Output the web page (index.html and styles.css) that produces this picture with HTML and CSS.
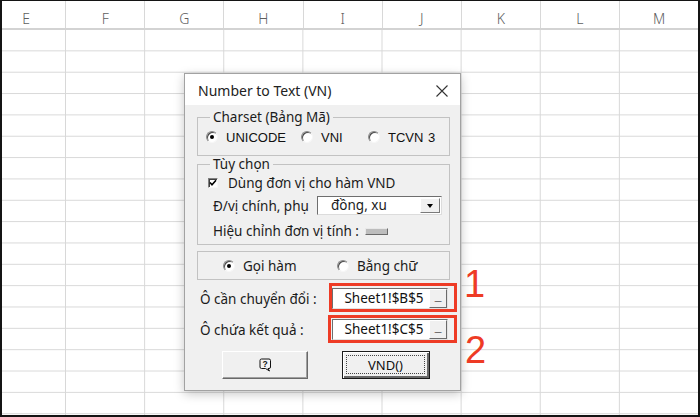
FILE: index.html
```html
<!DOCTYPE html>
<html>
<head>
<meta charset="utf-8">
<link rel="stylesheet" href="styles.css">
</head>
<body>
<div class="sheet">
  <div class="cols">
    <div class="col">E</div><div class="col">F</div><div class="col">G</div><div class="col">H</div><div class="col">I</div><div class="col">J</div><div class="col">K</div><div class="col">L</div><div class="col">M</div>
  </div>
  <div class="grid"></div>
</div>

<div class="dialog">
  <div class="titlebar">
    <span class="title">Number to Text (VN)</span>
    <svg class="close" width="12" height="12" viewBox="0 0 12 12"><path d="M0.5 0.5 L11.5 11.5 M11.5 0.5 L0.5 11.5" stroke="#333" stroke-width="1.1" fill="none"/></svg>
  </div>
  <div class="body">
    <fieldset class="group g1">
      <legend>Charset (Bảng Mã)</legend>
      <div class="g1-content">
        <label class="opt opt-a"><span class="radio on"></span><span class="sys">UNICODE</span></label>
        <label class="opt opt-b"><span class="radio"></span><span class="sys">VNI</span></label>
        <label class="opt"><span class="radio"></span><span class="sys tcvn">TCVN 3</span></label>
      </div>
    </fieldset>
    <fieldset class="group g2">
      <legend>Tùy chọn</legend>
      <div class="g2-content">
        <div class="row-check">
          <span class="check"><svg width="8" height="8" viewBox="0 0 8 8"><path d="M1 3.5 L3 5.8 L7 1.2" stroke="#000" stroke-width="1.6" fill="none"/></svg></span>
          <span>Dùng đơn vị cho hàm VND</span>
        </div>
        <div class="row-combo">
          <span class="combo-label">Đ/vị chính, phụ</span>
          <div class="combo">
            <span class="combo-text">đồng, xu</span>
            <span class="combo-btn"><span class="arrow"></span></span>
          </div>
        </div>
        <div class="row-adj">
          <span>Hiệu chỉnh đơn vị tính :</span>
          <span class="slider"></span>
        </div>
      </div>
    </fieldset>
    <div class="g3">
      <label class="opt opt-c"><span class="radio on"></span><span>Gọi hàm</span></label>
      <label class="opt"><span class="radio"></span><span>Bằng chữ</span></label>
    </div>
    <div class="refrow r1">
      <span class="ref-label">Ô cần chuyển đổi :</span>
      <div class="field"><span class="field-text">Sheet1!$B$5</span><span class="field-btn">_</span></div>
    </div>
    <div class="refrow r2">
      <span class="ref-label">Ô chứa kết quả :</span>
      <div class="field"><span class="field-text">Sheet1!$C$5</span><span class="field-btn">_</span></div>
    </div>
    <div class="buttons">
      <div class="btn btn-help">
        <svg width="13" height="14" viewBox="0 0 13 14"><path d="M2.5 1 H10 Q11.5 1 11.5 2.5 V9 Q11.5 10.5 10 10.5 H9 L10.5 13 L6.5 10.5 H2.5 Q1 10.5 1 9 V2.5 Q1 1 2.5 1 Z" fill="#f4f4f4" stroke="#111" stroke-width="1"/><text x="6.2" y="8.8" font-family="Liberation Sans, sans-serif" font-weight="bold" font-size="8.5" text-anchor="middle" fill="#111">?</text></svg>
      </div>
      <div class="btn btn-default"><span class="focus">VND()</span></div>
    </div>
  </div>
</div>

<div class="mark mark1"></div>
<div class="mark mark2"></div>
<div class="num num1">1</div>
<div class="num num2">2</div>
</body>
</html>
```
FILE: styles.css
```css
html, body {
  margin: 0;
  padding: 0;
}
body {
  width: 700px;
  height: 417px;
  overflow: hidden;
  background: #111;
}
.sheet {
  box-sizing: border-box;
  width: 700px;
  height: 417px;
  border-style: solid;
  border-color: #141414;
  border-width: 1px 2px 2px 2px;
  background: #fff;
  overflow: hidden;
}
.cols {
  display: flex;
  margin-left: -15px;
  height: 29px;
  box-sizing: border-box;
  border-bottom: 2px solid #d3d3d3;
}
.col {
  flex: 0 0 79.14px;
  box-sizing: border-box;
  border-right: 1px solid #d8d8d8;
  text-align: center;
  font-family: "Noto Sans", sans-serif;
  font-weight: 300;
  font-size: 14px;
  line-height: 16px;
  padding-top: 10px;
  color: #5e5e5e;
}
.grid {
  height: 400px;
  background-image:
    linear-gradient(to right, #d8d8d8 1px, transparent 1px),
    linear-gradient(to bottom, transparent 20.35px, #d8d8d8 20.35px);
  background-size: 79.14px 100%, 100% 21.35px;
  background-position: 63px 0, 0 0;
}

/* dialog */
.dialog {
  position: absolute;
  left: 184px;
  top: 73px;
  width: 277px;
  height: 318px;
  box-sizing: border-box;
  border: 1px solid #a2a2a2;
  background: #f0f0f0;
  box-shadow: 0 3px 10px rgba(0, 0, 0, 0.22);
  font-family: "Noto Sans", sans-serif;
  font-size: 13.5px;
  color: #1b1b1b;
}
.titlebar {
  height: 31px;
  background: #fff;
  display: flex;
  align-items: center;
  justify-content: space-between;
  padding: 2px 12px 0 13px;
  box-sizing: border-box;
}
.title {
  font-size: 14px;
  color: #222;
}
.close {
  display: block;
}
.body {
  padding: 4px 10px 0 12px;
}
.group {
  margin: 0;
  padding: 0;
  border: 1px solid #c2c2c2;
  min-width: 0;
}
.group legend {
  margin-left: 12px;
  padding: 0 3px;
  line-height: 17px;
  font-size: 13.5px;
}
.g1-content {
  display: flex;
  align-items: center;
  height: 16px;
  padding: 3px 0 10px 8px;
}
.opt {
  display: flex;
  align-items: center;
  white-space: nowrap;
}
.opt-a { width: 95px; }
.opt-b { width: 67px; }
.sys {
  font-family: "Liberation Sans", sans-serif;
  font-size: 13px;
  color: #111;
}
.tcvn { word-spacing: 1px; }
.radio {
  width: 12px;
  height: 12px;
  box-sizing: border-box;
  border-radius: 50%;
  background: #fff;
  border: 1px solid;
  border-color: #8a8a8a #f6f6f6 #f6f6f6 #8a8a8a;
  box-shadow: inset 1px 1px 0 #4a4a4a;
  margin-right: 8px;
  display: flex;
  align-items: center;
  justify-content: center;
  flex: 0 0 auto;
}
.radio.on::after {
  content: "";
  width: 4px;
  height: 4px;
  border-radius: 50%;
  background: #000;
}

.g2-content {
  padding: 2px 0 5px 0;
}
.row-check {
  display: flex;
  align-items: center;
  height: 16px;
  padding-left: 10px;
}
.check {
  width: 10px;
  height: 10px;
  box-sizing: border-box;
  background: #fff;
  border: 1px solid;
  border-color: #808080 #f8f8f8 #f8f8f8 #808080;
  box-shadow: inset 1px 1px 0 #404040;
  margin-right: 10px;
  display: flex;
  align-items: center;
  justify-content: center;
}
.check svg { display: block; }
.row-combo {
  display: flex;
  align-items: center;
  height: 19px;
  margin-top: 5px;
  padding-left: 15px;
}
.combo-label {
  width: 104px;
}
.combo {
  width: 125px;
  height: 19px;
  box-sizing: border-box;
  background: #fff;
  border: 1px solid;
  border-color: #6e6e6e #dcdcdc #dcdcdc #6e6e6e;
  display: flex;
  align-items: stretch;
}
.combo-text {
  flex: 1;
  padding-left: 13px;
  line-height: 16px;
}
.combo-btn {
  width: 20px;
  box-sizing: border-box;
  background: #f0f0f0;
  border: 1px solid;
  border-color: #fff #7a7a7a #7a7a7a #fff;
  margin: 1px;
  display: flex;
  align-items: center;
  justify-content: center;
}
.arrow {
  width: 0;
  height: 0;
  border-left: 3.5px solid transparent;
  border-right: 3.5px solid transparent;
  border-top: 4px solid #000;
}
.row-adj {
  display: flex;
  align-items: center;
  height: 16px;
  margin-top: 8px;
  padding-left: 15px;
}
.slider {
  width: 23px;
  height: 7px;
  box-sizing: border-box;
  background: #bdbdbd;
  border: 1px solid;
  border-color: #e8e8e8 #6a6a6a #6a6a6a #e8e8e8;
  margin-left: 6px;
}

.g3 {
  margin-top: 6px;
  height: 29px;
  box-sizing: border-box;
  border: 1px solid #c2c2c2;
  display: flex;
  align-items: center;
  padding-left: 25px;
}
.opt-c { width: 114px; }

.refrow {
  display: flex;
  align-items: center;
  height: 21px;
}
.r1 { margin-top: 8px; }
.r2 { margin-top: 10px; }
.ref-label {
  width: 132px;
  padding-left: 3px;
  box-sizing: content-box;
  white-space: nowrap;
}
.field {
  width: 116px;
  height: 21px;
  box-sizing: border-box;
  border: 1px solid;
  border-color: #6e6e6e #e2e2e2 #e2e2e2 #6e6e6e;
  background: #fff;
  display: flex;
}
.field-text {
  flex: 1;
  text-align: center;
  padding-left: 6px;
  line-height: 18px;
  font-size: 13.5px;
  color: #111;
}
.field-btn {
  width: 18px;
  box-sizing: border-box;
  background: #f0f0f0;
  border: 1px solid;
  border-color: #fff #6a6a6a #6a6a6a #fff;
  font-family: "Liberation Sans", sans-serif;
  font-weight: bold;
  font-size: 12px;
  line-height: 12px;
  text-align: center;
  color: #000;
}

.buttons {
  display: flex;
  margin-top: 11px;
  padding-left: 25px;
}
.btn {
  height: 28px;
  box-sizing: border-box;
  background: #f0f0f0;
  display: flex;
  align-items: center;
  justify-content: center;
}
.btn-help {
  width: 86px;
  border: 1px solid;
  border-color: #fff #696969 #696969 #fff;
  box-shadow: inset -1px -1px 0 #a0a0a0;
}
.btn-help svg { display: block; }
.btn-default {
  width: 88px;
  margin-left: 34px;
  border: 1px solid #1a1a1a;
  box-shadow: inset 1px 1px 0 #fff, inset -2px -2px 0 #696969;
  padding: 3px 4px 4px 3px;
  align-items: stretch;
}
.focus {
  flex: 1;
  border: 1px dotted #444;
  display: flex;
  align-items: center;
  justify-content: center;
  font-size: 13px;
  color: #111;
}

/* annotations */
.mark {
  position: absolute;
  box-sizing: border-box;
  border: 3px solid #ee3b25;
}
.mark1 { left: 329px; top: 283px; width: 128px; height: 29px; }
.mark2 { left: 328px; top: 315px; width: 129px; height: 28px; }
.num {
  position: absolute;
  font-family: "Liberation Sans", sans-serif;
  font-size: 38px;
  line-height: 38px;
  color: #ee3b25;
}
.num1 { left: 464px; top: 265px; }
.num2 { left: 465px; top: 331px; }
```
